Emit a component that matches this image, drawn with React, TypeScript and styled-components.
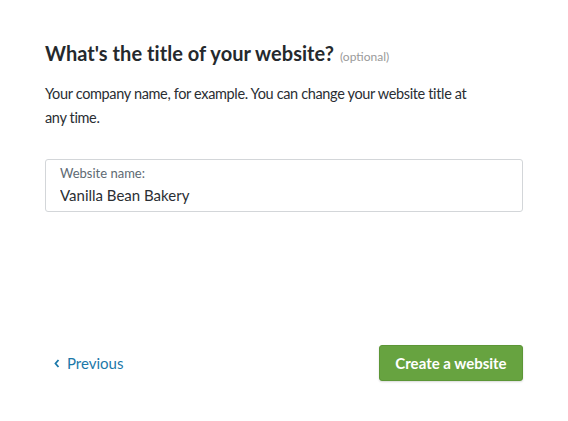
import React from "react";
import styled, { createGlobalStyle } from "styled-components";

const GlobalStyle = createGlobalStyle`
  html, body {
    margin: 0;
    padding: 0;
    background: #ffffff;
  }
  body {
    font-family: Lato, "Liberation Sans", sans-serif;
    -webkit-font-smoothing: antialiased;
  }
`;

const Page = styled.div`
  box-sizing: border-box;
  width: 568px;
  height: 421px;
  padding: 40px 45px 40px 45px;
  display: flex;
  flex-direction: column;
  background: #fff;
  border-radius: 4px;
`;

const Title = styled.h1`
  margin: 0;
  font-size: 20px;
  line-height: 26px;
  font-weight: 700;
  color: #25292d;
  letter-spacing: 0.05px;
`;

const Optional = styled.span`
  font-size: 12px;
  font-weight: 400;
  color: #9a9a9a;
  margin-left: 6px;
  letter-spacing: 0;
`;

const Lead = styled.p`
  margin: 12px 0 0 0;
  max-width: 440px;
  font-size: 14.5px;
  line-height: 24px;
  color: #2a2e33;
  letter-spacing: -0.35px;
`;

const Field = styled.label`
  margin-top: 29px;
  box-sizing: border-box;
  height: 53px;
  display: flex;
  flex-direction: column;
  padding: 5px 14px 0 14px;
  border: 1px solid #d3d6d9;
  border-radius: 3px;
`;

const FieldLabel = styled.span`
  font-size: 13px;
  line-height: 16px;
  color: #5e6a73;
`;

const FieldInput = styled.input`
  border: none;
  outline: none;
  padding: 0;
  margin-top: 4px;
  font-family: inherit;
  font-size: 15px;
  line-height: 20px;
  color: #2a2e33;
  background: transparent;
`;

const Footer = styled.div`
  margin-top: auto;
  display: flex;
  align-items: center;
  justify-content: space-between;
`;

const BackLink = styled.a`
  display: flex;
  align-items: center;
  gap: 7px;
  padding-left: 9px;
  font-size: 15px;
  color: #1b78a9;
  text-decoration: none;
  cursor: pointer;
`;

const PrimaryButton = styled.button`
  box-sizing: border-box;
  width: 144px;
  height: 36px;
  border: 1px solid #5c9636;
  border-radius: 3px;
  background: #67a340;
  color: #fff;
  font-family: inherit;
  font-size: 15px;
  font-weight: 700;
  cursor: pointer;
  box-shadow: 0 1px 2px rgba(0, 0, 0, 0.15);
`;

export default function App() {
  return (
    <>
      <GlobalStyle />
      <Page>
        <Title>
          What's the title of your website?
          <Optional>(optional)</Optional>
        </Title>
        <Lead>
          Your company name, for example. You can change your website title at
          any time.
        </Lead>
        <Field>
          <FieldLabel>Website name:</FieldLabel>
          <FieldInput defaultValue="Vanilla Bean Bakery" />
        </Field>
        <Footer>
          <BackLink>
            <svg width="6" height="9" viewBox="0 0 6 9">
              <path
                d="M4.5 1 L1.5 4.5 L4.5 8"
                fill="none"
                stroke="#1b78a9"
                strokeWidth="1.8"
              />
            </svg>
            Previous
          </BackLink>
          <PrimaryButton>Create a website</PrimaryButton>
        </Footer>
      </Page>
    </>
  );
}
